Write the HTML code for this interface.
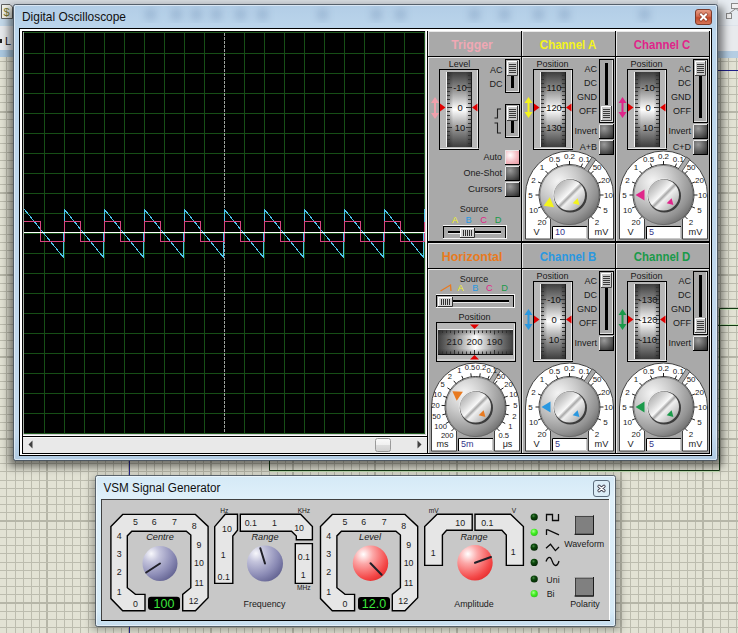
<!DOCTYPE html>
<html><head><meta charset="utf-8"><style>
html,body{margin:0;padding:0;width:738px;height:633px;overflow:hidden;background:#e2e2d4}
svg{display:block;font-family:'Liberation Sans', sans-serif}
</style></head><body>
<svg width="738" height="633" viewBox="0 0 738 633">

<defs>
 <linearGradient id="glass" x1="0" y1="0" x2="0" y2="1">
  <stop offset="0" stop-color="#b2cde6"/><stop offset="0.06" stop-color="#bcd6ec"/><stop offset="0.94" stop-color="#c4d9ec"/><stop offset="1" stop-color="#b0cae2"/>
 </linearGradient>
 <linearGradient id="glass2" x1="0" y1="0" x2="0" y2="1">
  <stop offset="0" stop-color="#d4e9f6"/><stop offset="0.15" stop-color="#dff0fa"/><stop offset="0.9" stop-color="#d6eaf6"/><stop offset="1" stop-color="#c4dcee"/>
 </linearGradient>
 <linearGradient id="closeg" x1="0" y1="0" x2="0" y2="1">
  <stop offset="0" stop-color="#e8a088"/><stop offset="0.45" stop-color="#d2694e"/><stop offset="0.55" stop-color="#c24a2c"/><stop offset="1" stop-color="#d8785a"/>
 </linearGradient>
 <linearGradient id="drumV" x1="0" y1="0" x2="0" y2="1">
  <stop offset="0" stop-color="#3e3e3e"/><stop offset="0.22" stop-color="#8a8a8a"/><stop offset="0.5" stop-color="#ffffff"/><stop offset="0.78" stop-color="#8a8a8a"/><stop offset="1" stop-color="#3e3e3e"/>
 </linearGradient>
 <linearGradient id="drumH" x1="0" y1="0" x2="1" y2="0">
  <stop offset="0" stop-color="#3e3e3e"/><stop offset="0.22" stop-color="#8a8a8a"/><stop offset="0.5" stop-color="#ffffff"/><stop offset="0.78" stop-color="#8a8a8a"/><stop offset="1" stop-color="#3e3e3e"/>
 </linearGradient>
 <linearGradient id="drumEdgeH" x1="0" y1="0" x2="1" y2="0">
  <stop offset="0" stop-color="#000" stop-opacity="0.35"/><stop offset="0.25" stop-color="#000" stop-opacity="0"/><stop offset="0.75" stop-color="#000" stop-opacity="0"/><stop offset="1" stop-color="#000" stop-opacity="0.35"/>
 </linearGradient>
 <linearGradient id="drumEdgeV" x1="0" y1="0" x2="0" y2="1">
  <stop offset="0" stop-color="#000" stop-opacity="0.35"/><stop offset="0.25" stop-color="#000" stop-opacity="0"/><stop offset="0.75" stop-color="#000" stop-opacity="0"/><stop offset="1" stop-color="#000" stop-opacity="0.35"/>
 </linearGradient>
 <radialGradient id="btnDark" cx="0.35" cy="0.3" r="0.8">
  <stop offset="0" stop-color="#9a9a9a"/><stop offset="1" stop-color="#2e2e2e"/>
 </radialGradient>
 <radialGradient id="btnPink" cx="0.35" cy="0.35" r="0.8">
  <stop offset="0" stop-color="#ffffff"/><stop offset="0.6" stop-color="#f3b8bf"/><stop offset="1" stop-color="#e89aa4"/>
 </radialGradient>
 <radialGradient id="knobOuter" cx="0.32" cy="0.28" r="0.9">
  <stop offset="0" stop-color="#f6f6f6"/><stop offset="0.35" stop-color="#cacaca"/><stop offset="0.72" stop-color="#939393"/><stop offset="1" stop-color="#555555"/>
 </radialGradient>
 <linearGradient id="knobInner" x1="0" y1="0" x2="1" y2="1">
  <stop offset="0" stop-color="#9a9a9a"/><stop offset="0.3" stop-color="#d4d4d4"/><stop offset="0.46" stop-color="#f8f8f8"/><stop offset="0.52" stop-color="#a8a8a8"/><stop offset="0.58" stop-color="#f0f0f0"/><stop offset="0.8" stop-color="#c0c0c0"/><stop offset="1" stop-color="#8a8a8a"/>
 </linearGradient>
 <radialGradient id="sphBlue" cx="0.25" cy="0.22" r="0.95">
  <stop offset="0" stop-color="#f8f8fc"/><stop offset="0.25" stop-color="#c4c4dc"/><stop offset="0.65" stop-color="#8c8cb6"/><stop offset="1" stop-color="#585888"/>
 </radialGradient>
 <radialGradient id="sphRed" cx="0.3" cy="0.25" r="0.9">
  <stop offset="0" stop-color="#ffffff"/><stop offset="0.3" stop-color="#fca8a8"/><stop offset="0.75" stop-color="#f44848"/><stop offset="1" stop-color="#e02424"/>
 </radialGradient>
 <radialGradient id="ledOff" cx="0.4" cy="0.35" r="0.7">
  <stop offset="0" stop-color="#4a8a4a"/><stop offset="0.35" stop-color="#0c4a0c"/><stop offset="1" stop-color="#042204"/>
 </radialGradient>
 <radialGradient id="ledOn" cx="0.4" cy="0.35" r="0.7">
  <stop offset="0" stop-color="#a8ff90"/><stop offset="0.5" stop-color="#40f020"/><stop offset="1" stop-color="#30c020"/>
 </radialGradient>
 <linearGradient id="thumbg" x1="0" y1="0" x2="0" y2="1">
  <stop offset="0" stop-color="#fafafa"/><stop offset="0.5" stop-color="#f0f0f0"/><stop offset="0.51" stop-color="#dedede"/><stop offset="1" stop-color="#d0d0d0"/>
 </linearGradient>
 <filter id="blur3" x="-20%" y="-20%" width="140%" height="140%"><feGaussianBlur stdDeviation="4"/></filter>
</defs>
<rect x="0" y="0" width="738" height="633" fill="#e2e2d4"/><rect x="6" y="0" width="1" height="633" fill="#bcbcae"/><rect x="15" y="0" width="1" height="633" fill="#bcbcae"/><rect x="23" y="0" width="1" height="633" fill="#bcbcae"/><rect x="31" y="0" width="1" height="633" fill="#bcbcae"/><rect x="39" y="0" width="1" height="633" fill="#bcbcae"/><rect x="46" y="0" width="2" height="633" fill="#b6b6a8"/><rect x="56" y="0" width="1" height="633" fill="#bcbcae"/><rect x="64" y="0" width="1" height="633" fill="#bcbcae"/><rect x="72" y="0" width="1" height="633" fill="#bcbcae"/><rect x="80" y="0" width="1" height="633" fill="#bcbcae"/><rect x="88" y="0" width="1" height="633" fill="#bcbcae"/><rect x="97" y="0" width="1" height="633" fill="#bcbcae"/><rect x="105" y="0" width="1" height="633" fill="#bcbcae"/><rect x="113" y="0" width="1" height="633" fill="#bcbcae"/><rect x="121" y="0" width="1" height="633" fill="#bcbcae"/><rect x="128" y="0" width="2" height="633" fill="#b6b6a8"/><rect x="138" y="0" width="1" height="633" fill="#bcbcae"/><rect x="146" y="0" width="1" height="633" fill="#bcbcae"/><rect x="154" y="0" width="1" height="633" fill="#bcbcae"/><rect x="162" y="0" width="1" height="633" fill="#bcbcae"/><rect x="170" y="0" width="1" height="633" fill="#bcbcae"/><rect x="179" y="0" width="1" height="633" fill="#bcbcae"/><rect x="187" y="0" width="1" height="633" fill="#bcbcae"/><rect x="195" y="0" width="1" height="633" fill="#bcbcae"/><rect x="203" y="0" width="1" height="633" fill="#bcbcae"/><rect x="210" y="0" width="2" height="633" fill="#b6b6a8"/><rect x="220" y="0" width="1" height="633" fill="#bcbcae"/><rect x="228" y="0" width="1" height="633" fill="#bcbcae"/><rect x="236" y="0" width="1" height="633" fill="#bcbcae"/><rect x="244" y="0" width="1" height="633" fill="#bcbcae"/><rect x="252" y="0" width="1" height="633" fill="#bcbcae"/><rect x="261" y="0" width="1" height="633" fill="#bcbcae"/><rect x="269" y="0" width="1" height="633" fill="#bcbcae"/><rect x="277" y="0" width="1" height="633" fill="#bcbcae"/><rect x="285" y="0" width="1" height="633" fill="#bcbcae"/><rect x="292" y="0" width="2" height="633" fill="#b6b6a8"/><rect x="302" y="0" width="1" height="633" fill="#bcbcae"/><rect x="310" y="0" width="1" height="633" fill="#bcbcae"/><rect x="318" y="0" width="1" height="633" fill="#bcbcae"/><rect x="326" y="0" width="1" height="633" fill="#bcbcae"/><rect x="334" y="0" width="1" height="633" fill="#bcbcae"/><rect x="343" y="0" width="1" height="633" fill="#bcbcae"/><rect x="351" y="0" width="1" height="633" fill="#bcbcae"/><rect x="359" y="0" width="1" height="633" fill="#bcbcae"/><rect x="367" y="0" width="1" height="633" fill="#bcbcae"/><rect x="374" y="0" width="2" height="633" fill="#b6b6a8"/><rect x="384" y="0" width="1" height="633" fill="#bcbcae"/><rect x="392" y="0" width="1" height="633" fill="#bcbcae"/><rect x="400" y="0" width="1" height="633" fill="#bcbcae"/><rect x="408" y="0" width="1" height="633" fill="#bcbcae"/><rect x="416" y="0" width="1" height="633" fill="#bcbcae"/><rect x="425" y="0" width="1" height="633" fill="#bcbcae"/><rect x="433" y="0" width="1" height="633" fill="#bcbcae"/><rect x="441" y="0" width="1" height="633" fill="#bcbcae"/><rect x="449" y="0" width="1" height="633" fill="#bcbcae"/><rect x="456" y="0" width="2" height="633" fill="#b6b6a8"/><rect x="466" y="0" width="1" height="633" fill="#bcbcae"/><rect x="474" y="0" width="1" height="633" fill="#bcbcae"/><rect x="482" y="0" width="1" height="633" fill="#bcbcae"/><rect x="490" y="0" width="1" height="633" fill="#bcbcae"/><rect x="498" y="0" width="1" height="633" fill="#bcbcae"/><rect x="507" y="0" width="1" height="633" fill="#bcbcae"/><rect x="515" y="0" width="1" height="633" fill="#bcbcae"/><rect x="523" y="0" width="1" height="633" fill="#bcbcae"/><rect x="531" y="0" width="1" height="633" fill="#bcbcae"/><rect x="538" y="0" width="2" height="633" fill="#b6b6a8"/><rect x="548" y="0" width="1" height="633" fill="#bcbcae"/><rect x="556" y="0" width="1" height="633" fill="#bcbcae"/><rect x="564" y="0" width="1" height="633" fill="#bcbcae"/><rect x="572" y="0" width="1" height="633" fill="#bcbcae"/><rect x="580" y="0" width="1" height="633" fill="#bcbcae"/><rect x="589" y="0" width="1" height="633" fill="#bcbcae"/><rect x="597" y="0" width="1" height="633" fill="#bcbcae"/><rect x="605" y="0" width="1" height="633" fill="#bcbcae"/><rect x="613" y="0" width="1" height="633" fill="#bcbcae"/><rect x="620" y="0" width="2" height="633" fill="#b6b6a8"/><rect x="630" y="0" width="1" height="633" fill="#bcbcae"/><rect x="638" y="0" width="1" height="633" fill="#bcbcae"/><rect x="646" y="0" width="1" height="633" fill="#bcbcae"/><rect x="654" y="0" width="1" height="633" fill="#bcbcae"/><rect x="662" y="0" width="1" height="633" fill="#bcbcae"/><rect x="671" y="0" width="1" height="633" fill="#bcbcae"/><rect x="679" y="0" width="1" height="633" fill="#bcbcae"/><rect x="687" y="0" width="1" height="633" fill="#bcbcae"/><rect x="695" y="0" width="1" height="633" fill="#bcbcae"/><rect x="702" y="0" width="2" height="633" fill="#b6b6a8"/><rect x="712" y="0" width="1" height="633" fill="#bcbcae"/><rect x="720" y="0" width="1" height="633" fill="#bcbcae"/><rect x="728" y="0" width="1" height="633" fill="#bcbcae"/><rect x="736" y="0" width="1" height="633" fill="#bcbcae"/><rect x="0" y="4" width="738" height="1" fill="#bcbcae"/><rect x="0" y="12" width="738" height="1" fill="#bcbcae"/><rect x="0" y="20" width="738" height="1" fill="#bcbcae"/><rect x="0" y="29" width="738" height="2" fill="#b6b6a8"/><rect x="0" y="37" width="738" height="1" fill="#bcbcae"/><rect x="0" y="45" width="738" height="1" fill="#bcbcae"/><rect x="0" y="53" width="738" height="1" fill="#bcbcae"/><rect x="0" y="61" width="738" height="1" fill="#bcbcae"/><rect x="0" y="70" width="738" height="1" fill="#bcbcae"/><rect x="0" y="78" width="738" height="1" fill="#bcbcae"/><rect x="0" y="86" width="738" height="1" fill="#bcbcae"/><rect x="0" y="94" width="738" height="1" fill="#bcbcae"/><rect x="0" y="102" width="738" height="1" fill="#bcbcae"/><rect x="0" y="111" width="738" height="2" fill="#b6b6a8"/><rect x="0" y="119" width="738" height="1" fill="#bcbcae"/><rect x="0" y="127" width="738" height="1" fill="#bcbcae"/><rect x="0" y="135" width="738" height="1" fill="#bcbcae"/><rect x="0" y="143" width="738" height="1" fill="#bcbcae"/><rect x="0" y="152" width="738" height="1" fill="#bcbcae"/><rect x="0" y="160" width="738" height="1" fill="#bcbcae"/><rect x="0" y="168" width="738" height="1" fill="#bcbcae"/><rect x="0" y="176" width="738" height="1" fill="#bcbcae"/><rect x="0" y="184" width="738" height="1" fill="#bcbcae"/><rect x="0" y="192" width="738" height="2" fill="#b6b6a8"/><rect x="0" y="201" width="738" height="1" fill="#bcbcae"/><rect x="0" y="209" width="738" height="1" fill="#bcbcae"/><rect x="0" y="217" width="738" height="1" fill="#bcbcae"/><rect x="0" y="225" width="738" height="1" fill="#bcbcae"/><rect x="0" y="234" width="738" height="1" fill="#bcbcae"/><rect x="0" y="242" width="738" height="1" fill="#bcbcae"/><rect x="0" y="250" width="738" height="1" fill="#bcbcae"/><rect x="0" y="258" width="738" height="1" fill="#bcbcae"/><rect x="0" y="266" width="738" height="1" fill="#bcbcae"/><rect x="0" y="274" width="738" height="2" fill="#b6b6a8"/><rect x="0" y="283" width="738" height="1" fill="#bcbcae"/><rect x="0" y="291" width="738" height="1" fill="#bcbcae"/><rect x="0" y="299" width="738" height="1" fill="#bcbcae"/><rect x="0" y="307" width="738" height="1" fill="#bcbcae"/><rect x="0" y="316" width="738" height="1" fill="#bcbcae"/><rect x="0" y="324" width="738" height="1" fill="#bcbcae"/><rect x="0" y="332" width="738" height="1" fill="#bcbcae"/><rect x="0" y="340" width="738" height="1" fill="#bcbcae"/><rect x="0" y="348" width="738" height="1" fill="#bcbcae"/><rect x="0" y="356" width="738" height="2" fill="#b6b6a8"/><rect x="0" y="365" width="738" height="1" fill="#bcbcae"/><rect x="0" y="373" width="738" height="1" fill="#bcbcae"/><rect x="0" y="381" width="738" height="1" fill="#bcbcae"/><rect x="0" y="389" width="738" height="1" fill="#bcbcae"/><rect x="0" y="398" width="738" height="1" fill="#bcbcae"/><rect x="0" y="406" width="738" height="1" fill="#bcbcae"/><rect x="0" y="414" width="738" height="1" fill="#bcbcae"/><rect x="0" y="422" width="738" height="1" fill="#bcbcae"/><rect x="0" y="430" width="738" height="1" fill="#bcbcae"/><rect x="0" y="438" width="738" height="2" fill="#b6b6a8"/><rect x="0" y="447" width="738" height="1" fill="#bcbcae"/><rect x="0" y="455" width="738" height="1" fill="#bcbcae"/><rect x="0" y="463" width="738" height="1" fill="#bcbcae"/><rect x="0" y="471" width="738" height="1" fill="#bcbcae"/><rect x="0" y="480" width="738" height="1" fill="#bcbcae"/><rect x="0" y="488" width="738" height="1" fill="#bcbcae"/><rect x="0" y="496" width="738" height="1" fill="#bcbcae"/><rect x="0" y="504" width="738" height="1" fill="#bcbcae"/><rect x="0" y="512" width="738" height="1" fill="#bcbcae"/><rect x="0" y="520" width="738" height="2" fill="#b6b6a8"/><rect x="0" y="529" width="738" height="1" fill="#bcbcae"/><rect x="0" y="537" width="738" height="1" fill="#bcbcae"/><rect x="0" y="545" width="738" height="1" fill="#bcbcae"/><rect x="0" y="553" width="738" height="1" fill="#bcbcae"/><rect x="0" y="562" width="738" height="1" fill="#bcbcae"/><rect x="0" y="570" width="738" height="1" fill="#bcbcae"/><rect x="0" y="578" width="738" height="1" fill="#bcbcae"/><rect x="0" y="586" width="738" height="1" fill="#bcbcae"/><rect x="0" y="594" width="738" height="1" fill="#bcbcae"/><rect x="0" y="602" width="738" height="2" fill="#b6b6a8"/><rect x="0" y="611" width="738" height="1" fill="#bcbcae"/><rect x="0" y="619" width="738" height="1" fill="#bcbcae"/><rect x="0" y="627" width="738" height="1" fill="#bcbcae"/><rect x="0" y="0" width="738" height="26" fill="#dde3ea"/><rect x="0" y="0" width="738" height="4" fill="#d6dbe0"/><rect x="0" y="18" width="16" height="8" fill="#c4d9ea"/><rect x="0" y="26" width="738" height="25" fill="#e8eaed"/><rect x="0" y="50" width="16" height="7" fill="#aac8e0"/><rect x="718" y="51" width="20" height="7" fill="#b4cde3"/><rect x="718" y="0" width="20" height="25" fill="#e6ebf0"/><path d="M1.5 4.5 H10 L12.5 7 V18.5 H1.5 Z" fill="#f2f2ea" stroke="#606060"/><text x="6.5" y="16" font-family="'Liberation Sans', sans-serif" font-size="11" fill="#7a7a30" text-anchor="middle">$</text><rect x="0" y="39" width="2" height="4" fill="#202020"/><text x="5" y="44.5" font-family="'Liberation Sans', sans-serif" font-size="11" fill="#101010">L</text><g stroke="#8a8a8a" fill="#f0f0f0"><rect x="731.5" y="3.5" width="9" height="5"/><rect x="726.5" y="13.5" width="5" height="5"/><rect x="738.5" y="13.5" width="5" height="5"/><path d="M736 8.5 L729 13.5 M736 8.5 L741 13.5" fill="none"/></g><rect x="718" y="70" width="20" height="1" fill="#20208a"/><rect x="129" y="455" width="1" height="178" fill="#2a2a90"/><path d="M269.5 455 V470.5 H719.5 V308.5 H738 M718 325.5 H738" fill="none" stroke="#143a14" stroke-width="1"/><path d="M720 309.5 H738 M720 324.5 H738 M270 471.5 H719" fill="none" stroke="#c8f0b8" stroke-width="1" opacity="0.7"/><rect x="9" y="7" width="714" height="460" fill="#000" opacity="0.5" filter="url(#blur3)"/><rect x="92" y="477" width="528" height="153" fill="#000" opacity="0.3" filter="url(#blur3)"/><rect x="13.5" y="4.5" width="704" height="456" rx="2" fill="url(#glass)" stroke="#3c4650" stroke-opacity="0.8"/><rect x="14.5" y="5.5" width="702" height="454" rx="1.5" fill="none" stroke="#ffffff" stroke-opacity="0.5"/><g filter="url(#blur3)" opacity="0.22"><rect x="146" y="9" width="9" height="11" fill="#2a4a7a"/><rect x="172" y="9" width="9" height="11" fill="#2a4a7a"/><rect x="192" y="9" width="9" height="11" fill="#2a4a7a"/><rect x="212" y="9" width="9" height="11" fill="#2a4a7a"/><rect x="236" y="9" width="9" height="11" fill="#2a4a7a"/><rect x="258" y="9" width="9" height="11" fill="#2a4a7a"/><rect x="318" y="9" width="9" height="11" fill="#2a4a7a"/><rect x="372" y="9" width="9" height="11" fill="#2a4a7a"/><rect x="396" y="9" width="9" height="11" fill="#2a4a7a"/><rect x="470" y="9" width="9" height="11" fill="#2a4a7a"/><rect x="500" y="9" width="9" height="11" fill="#2a4a7a"/><rect x="534" y="9" width="9" height="11" fill="#2a4a7a"/><rect x="560" y="9" width="9" height="11" fill="#2a4a7a"/><rect x="640" y="9" width="9" height="11" fill="#2a4a7a"/></g><text x="22" y="21" font-size="12.4" fill="#101010" text-anchor="start" font-weight="normal" font-style="normal" textLength="104" lengthAdjust="spacingAndGlyphs">Digital Oscilloscope</text><rect x="695.5" y="9.5" width="16" height="15" rx="2.5" fill="url(#closeg)" stroke="#7a3a2a"/><path d="M701 14.5 L706 19.5 M706 14.5 L701 19.5" stroke="#5a2010" stroke-width="3.4" stroke-linecap="square" opacity="0.55"/><path d="M701 14.5 L706 19.5 M706 14.5 L701 19.5" stroke="#ffffff" stroke-width="2" stroke-linecap="square"/><rect x="19" y="28" width="693" height="428" fill="#000"/><rect x="20" y="29" width="691" height="426" fill="#ffffff"/><rect x="22" y="31" width="688" height="423" fill="#000"/><rect x="23" y="32" width="403" height="402" fill="#000"/><rect x="23" y="32" width="1" height="402" fill="#164e16"/><rect x="44" y="32" width="1" height="402" fill="#164e16"/><rect x="64" y="32" width="1" height="402" fill="#164e16"/><rect x="84" y="32" width="1" height="402" fill="#164e16"/><rect x="104" y="32" width="1" height="402" fill="#164e16"/><rect x="124" y="32" width="1" height="402" fill="#164e16"/><rect x="144" y="32" width="1" height="402" fill="#164e16"/><rect x="164" y="32" width="1" height="402" fill="#164e16"/><rect x="184" y="32" width="1" height="402" fill="#164e16"/><rect x="204" y="32" width="1" height="402" fill="#164e16"/><rect x="244" y="32" width="1" height="402" fill="#164e16"/><rect x="264" y="32" width="1" height="402" fill="#164e16"/><rect x="284" y="32" width="1" height="402" fill="#164e16"/><rect x="304" y="32" width="1" height="402" fill="#164e16"/><rect x="324" y="32" width="1" height="402" fill="#164e16"/><rect x="344" y="32" width="1" height="402" fill="#164e16"/><rect x="364" y="32" width="1" height="402" fill="#164e16"/><rect x="384" y="32" width="1" height="402" fill="#164e16"/><rect x="404" y="32" width="1" height="402" fill="#164e16"/><rect x="424" y="32" width="1" height="402" fill="#164e16"/><rect x="23" y="32" width="403" height="1" fill="#164e16"/><rect x="23" y="53" width="403" height="1" fill="#164e16"/><rect x="23" y="73" width="403" height="1" fill="#164e16"/><rect x="23" y="93" width="403" height="1" fill="#164e16"/><rect x="23" y="113" width="403" height="1" fill="#164e16"/><rect x="23" y="133" width="403" height="1" fill="#164e16"/><rect x="23" y="153" width="403" height="1" fill="#164e16"/><rect x="23" y="173" width="403" height="1" fill="#164e16"/><rect x="23" y="193" width="403" height="1" fill="#164e16"/><rect x="23" y="213" width="403" height="1" fill="#164e16"/><rect x="23" y="233" width="403" height="1" fill="#164e16"/><rect x="23" y="253" width="403" height="1" fill="#164e16"/><rect x="23" y="273" width="403" height="1" fill="#164e16"/><rect x="23" y="293" width="403" height="1" fill="#164e16"/><rect x="23" y="313" width="403" height="1" fill="#164e16"/><rect x="23" y="333" width="403" height="1" fill="#164e16"/><rect x="23" y="353" width="403" height="1" fill="#164e16"/><rect x="23" y="373" width="403" height="1" fill="#164e16"/><rect x="23" y="393" width="403" height="1" fill="#164e16"/><rect x="23" y="413" width="403" height="1" fill="#164e16"/><rect x="23" y="433" width="403" height="1" fill="#164e16"/><rect x="23.5" y="32.5" width="401" height="401" fill="none" stroke="#1e561e"/><line x1="224.5" y1="33" x2="224.5" y2="433" stroke="#9ca29c" stroke-dasharray="3,1"/><polyline points="24.5,209.5 63.5,257.5 64.5,209.5 103.5,257.5 104.5,209.5 143.5,257.5 144.5,209.5 183.5,257.5 184.5,209.5 223.5,257.5 224.5,209.5 263.5,257.5 264.5,209.5 303.5,257.5 304.5,209.5 343.5,257.5 344.5,209.5 383.5,257.5 384.5,209.5 423.5,257.5 424.5,209.5 424.5,209.5" fill="none" stroke="#4cc4ec" stroke-width="1" shape-rendering="crispEdges"/><polyline points="23.5,241.5 23.5,221.5 40.5,221.5 40.5,241.5 64.5,241.5 64.5,221.5 80.5,221.5 80.5,241.5 104.5,241.5 104.5,221.5 120.5,221.5 120.5,241.5 144.5,241.5 144.5,221.5 160.5,221.5 160.5,241.5 184.5,241.5 184.5,221.5 200.5,221.5 200.5,241.5 224.5,241.5 224.5,221.5 240.5,221.5 240.5,241.5 264.5,241.5 264.5,221.5 280.5,221.5 280.5,241.5 304.5,241.5 304.5,221.5 320.5,221.5 320.5,241.5 344.5,241.5 344.5,221.5 360.5,221.5 360.5,241.5 384.5,241.5 384.5,221.5 400.5,221.5 400.5,241.5 424.5,241.5 424.5,221.5" fill="none" stroke="#d8447e" stroke-width="1" shape-rendering="crispEdges"/><rect x="23" y="232" width="403" height="1" fill="#ffffff"/><rect x="23" y="32" width="1" height="402" fill="#a8b0a8"/><rect x="425" y="31" width="1" height="405" fill="#d8d8d8"/><rect x="426" y="31" width="1" height="405" fill="#ffffff"/><rect x="23" y="434" width="403" height="1" fill="#d0d0d0"/><rect x="23" y="435" width="403" height="1" fill="#ffffff"/><rect x="23" y="437" width="404" height="16" fill="#e9e9e9"/><rect x="23" y="437" width="404" height="1" fill="#f8f8f8"/><path d="M28.5 444.5 L32.5 440.5 L32.5 448.5 Z" fill="#404040"/><path d="M421.5 444.5 L417.5 440.5 L417.5 448.5 Z" fill="#404040"/><rect x="375.5" y="438.5" width="15" height="13" rx="2" fill="url(#thumbg)" stroke="#9a9a9a"/><rect x="428" y="31" width="282" height="423" fill="#000"/><rect x="522" y="31" width="93" height="25" fill="#a9a9a9"/><rect x="522" y="31" width="93" height="1" fill="#e8e8e8"/><rect x="522" y="31" width="1" height="25" fill="#e8e8e8"/><rect x="522" y="57" width="93" height="184" fill="#a9a9a9"/><rect x="522" y="57" width="93" height="1" fill="#e8e8e8"/><rect x="522" y="57" width="1" height="184" fill="#e8e8e8"/><text x="568.1" y="48.8" font-size="12" fill="#f4f41c" text-anchor="middle" font-weight="bold" font-style="normal" textLength="56.5" lengthAdjust="spacingAndGlyphs">Channel A</text><text x="552.5" y="66.5" font-size="9" fill="#1a1a1a" text-anchor="middle" font-weight="normal" font-style="normal" >Position</text><rect x="533.5" y="69.5" width="39" height="80" fill="#b8b8b8" stroke="#000"/><path d="M534 148.5 H572.5 M571.5 70 V148.5" stroke="#e8e8e8" fill="none"/><rect x="541" y="72" width="25" height="75" fill="url(#drumV)"/><rect x="541" y="72" width="25" height="75" fill="url(#drumEdgeH)"/><rect x="540" y="72" width="1" height="75" fill="#f4f4f4"/><rect x="565" y="72" width="1" height="75" fill="#1a1a1a"/><path d="M541 75.5 h3 M565 75.5 h-3 M541 79.5 h3 M565 79.5 h-3 M541 83.5 h3 M565 83.5 h-3 M541 87.5 h5 M565 87.5 h-5 M541 91.5 h3 M565 91.5 h-3 M541 95.5 h3 M565 95.5 h-3 M541 99.5 h3 M565 99.5 h-3 M541 103.5 h3 M565 103.5 h-3 M541 107.5 h5 M565 107.5 h-5 M541 111.5 h3 M565 111.5 h-3 M541 115.5 h3 M565 115.5 h-3 M541 119.5 h3 M565 119.5 h-3 M541 123.5 h3 M565 123.5 h-3 M541 127.5 h5 M565 127.5 h-5 M541 131.5 h3 M565 131.5 h-3 M541 135.5 h3 M565 135.5 h-3 M541 139.5 h3 M565 139.5 h-3 M541 143.5 h3 M565 143.5 h-3" stroke="#333" stroke-width="1" fill="none"/><text x="554.0" y="90.8" font-size="9.4" fill="#101010" text-anchor="middle" font-weight="normal" font-style="normal" >110</text><text x="554.0" y="110.8" font-size="9.4" fill="#101010" text-anchor="middle" font-weight="normal" font-style="normal" >120</text><text x="554.0" y="130.8" font-size="9.4" fill="#101010" text-anchor="middle" font-weight="normal" font-style="normal" >130</text><path d="M534 103.5 L539.5 107.5 L534 111.5 Z" fill="#e00000"/><path d="M571.5 103.5 L566 107.5 L571.5 111.5 Z" fill="#e00000"/><path d="M528.5 97 L532.5 103 L529.5 103 L529.5 112 L532.5 112 L528.5 118 L524.5 112 L527.5 112 L527.5 103 L524.5 103 Z" fill="#f4f41c"/><text x="597" y="72.3" font-size="9" fill="#1a1a1a" text-anchor="end" font-weight="normal" font-style="normal" >AC</text><text x="597" y="86.3" font-size="9" fill="#1a1a1a" text-anchor="end" font-weight="normal" font-style="normal" >DC</text><text x="597" y="100.3" font-size="9" fill="#1a1a1a" text-anchor="end" font-weight="normal" font-style="normal" >GND</text><text x="597" y="114.3" font-size="9" fill="#1a1a1a" text-anchor="end" font-weight="normal" font-style="normal" >OFF</text><rect x="599.5" y="59.5" width="14" height="63" fill="#a9a9a9" stroke="#000"/><path d="M600 121.5 H613 M612.5 60 V122" stroke="#e0e0e0" fill="none"/><rect x="605" y="63" width="3" height="42" fill="#000"/><rect x="601" y="106" width="11" height="15" fill="#c8c8c8"/><path d="M601.5 121 V106.5 H611.5" stroke="#ffffff" fill="none"/><path d="M601 120.5 H611.5 V106" stroke="#404040" fill="none"/><path d="M603 109.5 H610 M603 111.5 H610 M603 113.5 H610 M603 115.5 H610 M603 117.5 H610" stroke="#3a3a3a" stroke-width="1" fill="none"/><text x="597" y="133.8" font-size="9" fill="#1a1a1a" text-anchor="end" font-weight="normal" font-style="normal" >Invert</text><rect x="599" y="124" width="15" height="15" fill="url(#btnDark)"/><path d="M599.5 139 V124.5 H614" stroke="#e8e8e8" fill="none"/><path d="M599 138.5 H613.5 V124" stroke="#000" fill="none"/><text x="597" y="149.8" font-size="9" fill="#1a1a1a" text-anchor="end" font-weight="normal" font-style="normal" >A+B</text><rect x="599" y="140" width="15" height="15" fill="url(#btnDark)"/><path d="M599.5 155 V140.5 H614" stroke="#e8e8e8" fill="none"/><path d="M599 154.5 H613.5 V140" stroke="#000" fill="none"/><path d="M525.5 239 V195 A44 44 0 0 1 613.5 195 V239 H588.5 V218.86 A30.5 30.5 0 1 0 550.5 218.86 V239 Z" fill="#ffffff" stroke="#404040" stroke-width="1"/><polygon points="583.78,169.67 592.28,156.94 595.94,159.39 587.44,172.11" fill="#a9a9a9" stroke="#404040" stroke-width="0.8"/><text x="541.92" y="225.46" font-size="8.0" fill="#1a1a1a" text-anchor="middle" font-weight="normal" font-style="normal" >20</text><text x="533.47" y="212.8" font-size="8.0" fill="#1a1a1a" text-anchor="middle" font-weight="normal" font-style="normal" >10</text><text x="530.5" y="197.88" font-size="8.0" fill="#1a1a1a" text-anchor="middle" font-weight="normal" font-style="normal" >5</text><text x="533.47" y="182.96" font-size="8.0" fill="#1a1a1a" text-anchor="middle" font-weight="normal" font-style="normal" >2</text><text x="541.92" y="170.3" font-size="8.0" fill="#1a1a1a" text-anchor="middle" font-weight="normal" font-style="normal" >1</text><text x="554.58" y="161.85" font-size="8.0" fill="#1a1a1a" text-anchor="middle" font-weight="normal" font-style="normal" >0.5</text><text x="569.5" y="158.88" font-size="8.0" fill="#1a1a1a" text-anchor="middle" font-weight="normal" font-style="normal" >0.2</text><text x="584.42" y="161.85" font-size="8.0" fill="#1a1a1a" text-anchor="middle" font-weight="normal" font-style="normal" >0.1</text><text x="597.08" y="170.3" font-size="8.0" fill="#1a1a1a" text-anchor="middle" font-weight="normal" font-style="normal" >50</text><text x="605.53" y="182.96" font-size="8.0" fill="#1a1a1a" text-anchor="middle" font-weight="normal" font-style="normal" >20</text><text x="608.5" y="197.88" font-size="8.0" fill="#1a1a1a" text-anchor="middle" font-weight="normal" font-style="normal" >10</text><text x="605.53" y="212.8" font-size="8.0" fill="#1a1a1a" text-anchor="middle" font-weight="normal" font-style="normal" >5</text><text x="597.08" y="225.46" font-size="8.0" fill="#1a1a1a" text-anchor="middle" font-weight="normal" font-style="normal" >2</text><path d="M548.64 215.86 L545.46 219.04 M542.25 206.29 L538.09 208.01 M540.00 195.00 L535.50 195.00 M542.25 183.71 L538.09 181.99 M548.64 174.14 L545.46 170.96 M558.21 167.75 L556.49 163.59 M569.50 165.50 L569.50 161.00 M580.79 167.75 L582.51 163.59 M590.36 174.14 L593.54 170.96 M596.75 183.71 L600.91 181.99 M599.00 195.00 L603.50 195.00 M596.75 206.29 L600.91 208.01 M590.36 215.86 L593.54 219.04" stroke="#202020" stroke-width="1" fill="none"/><text x="536.5" y="234.7" font-size="9.2" fill="#1a1a1a" text-anchor="middle" font-weight="normal" font-style="normal" >V</text><text x="601.5" y="234.7" font-size="9.2" fill="#1a1a1a" text-anchor="middle" font-weight="normal" font-style="normal" >mV</text><rect x="552" y="226" width="35" height="13" fill="#ffffff"/><path d="M552.5 239 V226.5 H587" stroke="#000" fill="none"/><path d="M553 238.5 H586.5 V227" stroke="#c8c8c8" fill="none"/><text x="555" y="235.4" font-size="9" fill="#34348a" text-anchor="start" font-weight="normal" font-style="normal" >10</text><circle cx="569.5" cy="195" r="30" fill="url(#knobOuter)"/><circle cx="569.5" cy="195" r="29.6" fill="none" stroke="#5a5a5a" stroke-width="0.8" opacity="0.7"/><circle cx="568.9" cy="194.4" r="16.3" fill="#e8e8e8" opacity="0.8"/><circle cx="570.4" cy="195.9" r="16.6" fill="#2a2a2a" opacity="0.85"/><circle cx="569.5" cy="195" r="15.5" fill="url(#knobInner)"/><polygon points="543.63,205.72 549.84,197.19 554.05,207.35" fill="#f4f41c"/><polygon points="579.40,204.90 572.68,203.13 577.63,198.18" fill="#f4f41c"/><rect x="616" y="31" width="93" height="25" fill="#a9a9a9"/><rect x="616" y="31" width="93" height="1" fill="#e8e8e8"/><rect x="616" y="31" width="1" height="25" fill="#e8e8e8"/><rect x="616" y="57" width="93" height="184" fill="#a9a9a9"/><rect x="616" y="57" width="93" height="1" fill="#e8e8e8"/><rect x="616" y="57" width="1" height="184" fill="#e8e8e8"/><text x="662.1" y="48.8" font-size="12" fill="#e0258a" text-anchor="middle" font-weight="bold" font-style="normal" textLength="56.5" lengthAdjust="spacingAndGlyphs">Channel C</text><text x="646.5" y="66.5" font-size="9" fill="#1a1a1a" text-anchor="middle" font-weight="normal" font-style="normal" >Position</text><rect x="627.5" y="69.5" width="39" height="80" fill="#b8b8b8" stroke="#000"/><path d="M628 148.5 H666.5 M665.5 70 V148.5" stroke="#e8e8e8" fill="none"/><rect x="635" y="72" width="25" height="75" fill="url(#drumV)"/><rect x="635" y="72" width="25" height="75" fill="url(#drumEdgeH)"/><rect x="634" y="72" width="1" height="75" fill="#f4f4f4"/><rect x="659" y="72" width="1" height="75" fill="#1a1a1a"/><path d="M635 75.5 h3 M659 75.5 h-3 M635 79.5 h3 M659 79.5 h-3 M635 83.5 h3 M659 83.5 h-3 M635 87.5 h5 M659 87.5 h-5 M635 91.5 h3 M659 91.5 h-3 M635 95.5 h3 M659 95.5 h-3 M635 99.5 h3 M659 99.5 h-3 M635 103.5 h3 M659 103.5 h-3 M635 107.5 h5 M659 107.5 h-5 M635 111.5 h3 M659 111.5 h-3 M635 115.5 h3 M659 115.5 h-3 M635 119.5 h3 M659 119.5 h-3 M635 123.5 h3 M659 123.5 h-3 M635 127.5 h5 M659 127.5 h-5 M635 131.5 h3 M659 131.5 h-3 M635 135.5 h3 M659 135.5 h-3 M635 139.5 h3 M659 139.5 h-3 M635 143.5 h3 M659 143.5 h-3" stroke="#333" stroke-width="1" fill="none"/><text x="648.0" y="90.8" font-size="9.4" fill="#101010" text-anchor="middle" font-weight="normal" font-style="normal" >-10</text><text x="648.0" y="110.8" font-size="9.4" fill="#101010" text-anchor="middle" font-weight="normal" font-style="normal" >0</text><text x="648.0" y="130.8" font-size="9.4" fill="#101010" text-anchor="middle" font-weight="normal" font-style="normal" >10</text><path d="M628 103.5 L633.5 107.5 L628 111.5 Z" fill="#e00000"/><path d="M665.5 103.5 L660 107.5 L665.5 111.5 Z" fill="#e00000"/><path d="M622.5 97 L626.5 103 L623.5 103 L623.5 112 L626.5 112 L622.5 118 L618.5 112 L621.5 112 L621.5 103 L618.5 103 Z" fill="#e0258a"/><text x="691" y="72.3" font-size="9" fill="#1a1a1a" text-anchor="end" font-weight="normal" font-style="normal" >AC</text><text x="691" y="86.3" font-size="9" fill="#1a1a1a" text-anchor="end" font-weight="normal" font-style="normal" >DC</text><text x="691" y="100.3" font-size="9" fill="#1a1a1a" text-anchor="end" font-weight="normal" font-style="normal" >GND</text><text x="691" y="114.3" font-size="9" fill="#1a1a1a" text-anchor="end" font-weight="normal" font-style="normal" >OFF</text><rect x="693.5" y="59.5" width="14" height="63" fill="#a9a9a9" stroke="#000"/><path d="M694 121.5 H707 M706.5 60 V122" stroke="#e0e0e0" fill="none"/><rect x="699" y="76" width="3" height="42" fill="#000"/><rect x="695" y="61" width="11" height="15" fill="#c8c8c8"/><path d="M695.5 76 V61.5 H705.5" stroke="#ffffff" fill="none"/><path d="M695 75.5 H705.5 V61" stroke="#404040" fill="none"/><path d="M697 64.5 H704 M697 66.5 H704 M697 68.5 H704 M697 70.5 H704 M697 72.5 H704" stroke="#3a3a3a" stroke-width="1" fill="none"/><text x="691" y="133.8" font-size="9" fill="#1a1a1a" text-anchor="end" font-weight="normal" font-style="normal" >Invert</text><rect x="693" y="124" width="15" height="15" fill="url(#btnDark)"/><path d="M693.5 139 V124.5 H708" stroke="#e8e8e8" fill="none"/><path d="M693 138.5 H707.5 V124" stroke="#000" fill="none"/><text x="691" y="149.8" font-size="9" fill="#1a1a1a" text-anchor="end" font-weight="normal" font-style="normal" >C+D</text><rect x="693" y="140" width="15" height="15" fill="url(#btnDark)"/><path d="M693.5 155 V140.5 H708" stroke="#e8e8e8" fill="none"/><path d="M693 154.5 H707.5 V140" stroke="#000" fill="none"/><path d="M619.5 239 V195 A44 44 0 0 1 707.5 195 V239 H682.5 V218.86 A30.5 30.5 0 1 0 644.5 218.86 V239 Z" fill="#ffffff" stroke="#404040" stroke-width="1"/><polygon points="677.78,169.67 686.28,156.94 689.94,159.39 681.44,172.11" fill="#a9a9a9" stroke="#404040" stroke-width="0.8"/><text x="635.92" y="225.46" font-size="8.0" fill="#1a1a1a" text-anchor="middle" font-weight="normal" font-style="normal" >20</text><text x="627.47" y="212.8" font-size="8.0" fill="#1a1a1a" text-anchor="middle" font-weight="normal" font-style="normal" >10</text><text x="624.5" y="197.88" font-size="8.0" fill="#1a1a1a" text-anchor="middle" font-weight="normal" font-style="normal" >5</text><text x="627.47" y="182.96" font-size="8.0" fill="#1a1a1a" text-anchor="middle" font-weight="normal" font-style="normal" >2</text><text x="635.92" y="170.3" font-size="8.0" fill="#1a1a1a" text-anchor="middle" font-weight="normal" font-style="normal" >1</text><text x="648.58" y="161.85" font-size="8.0" fill="#1a1a1a" text-anchor="middle" font-weight="normal" font-style="normal" >0.5</text><text x="663.5" y="158.88" font-size="8.0" fill="#1a1a1a" text-anchor="middle" font-weight="normal" font-style="normal" >0.2</text><text x="678.42" y="161.85" font-size="8.0" fill="#1a1a1a" text-anchor="middle" font-weight="normal" font-style="normal" >0.1</text><text x="691.08" y="170.3" font-size="8.0" fill="#1a1a1a" text-anchor="middle" font-weight="normal" font-style="normal" >50</text><text x="699.53" y="182.96" font-size="8.0" fill="#1a1a1a" text-anchor="middle" font-weight="normal" font-style="normal" >20</text><text x="702.5" y="197.88" font-size="8.0" fill="#1a1a1a" text-anchor="middle" font-weight="normal" font-style="normal" >10</text><text x="699.53" y="212.8" font-size="8.0" fill="#1a1a1a" text-anchor="middle" font-weight="normal" font-style="normal" >5</text><text x="691.08" y="225.46" font-size="8.0" fill="#1a1a1a" text-anchor="middle" font-weight="normal" font-style="normal" >2</text><path d="M642.64 215.86 L639.46 219.04 M636.25 206.29 L632.09 208.01 M634.00 195.00 L629.50 195.00 M636.25 183.71 L632.09 181.99 M642.64 174.14 L639.46 170.96 M652.21 167.75 L650.49 163.59 M663.50 165.50 L663.50 161.00 M674.79 167.75 L676.51 163.59 M684.36 174.14 L687.54 170.96 M690.75 183.71 L694.91 181.99 M693.00 195.00 L697.50 195.00 M690.75 206.29 L694.91 208.01 M684.36 215.86 L687.54 219.04" stroke="#202020" stroke-width="1" fill="none"/><text x="630.5" y="234.7" font-size="9.2" fill="#1a1a1a" text-anchor="middle" font-weight="normal" font-style="normal" >V</text><text x="695.5" y="234.7" font-size="9.2" fill="#1a1a1a" text-anchor="middle" font-weight="normal" font-style="normal" >mV</text><rect x="646" y="226" width="35" height="13" fill="#ffffff"/><path d="M646.5 239 V226.5 H681" stroke="#000" fill="none"/><path d="M647 238.5 H680.5 V227" stroke="#c8c8c8" fill="none"/><text x="649" y="235.4" font-size="9" fill="#34348a" text-anchor="start" font-weight="normal" font-style="normal" >5</text><circle cx="663.5" cy="195" r="30" fill="url(#knobOuter)"/><circle cx="663.5" cy="195" r="29.6" fill="none" stroke="#5a5a5a" stroke-width="0.8" opacity="0.7"/><circle cx="662.9" cy="194.4" r="16.3" fill="#e8e8e8" opacity="0.8"/><circle cx="664.4" cy="195.9" r="16.6" fill="#2a2a2a" opacity="0.85"/><circle cx="663.5" cy="195" r="15.5" fill="url(#knobInner)"/><polygon points="635.50,195.00 644.50,189.50 644.50,200.50" fill="#e0258a"/><polygon points="673.40,204.90 666.68,203.13 671.63,198.18" fill="#e0258a"/><rect x="522" y="243" width="93" height="25" fill="#a9a9a9"/><rect x="522" y="243" width="93" height="1" fill="#e8e8e8"/><rect x="522" y="243" width="1" height="25" fill="#e8e8e8"/><rect x="522" y="269" width="93" height="184" fill="#a9a9a9"/><rect x="522" y="269" width="93" height="1" fill="#e8e8e8"/><rect x="522" y="269" width="1" height="184" fill="#e8e8e8"/><text x="568.1" y="260.8" font-size="12" fill="#2a98e0" text-anchor="middle" font-weight="bold" font-style="normal" textLength="56.5" lengthAdjust="spacingAndGlyphs">Channel B</text><text x="552.5" y="278.5" font-size="9" fill="#1a1a1a" text-anchor="middle" font-weight="normal" font-style="normal" >Position</text><rect x="533.5" y="281.5" width="39" height="80" fill="#b8b8b8" stroke="#000"/><path d="M534 360.5 H572.5 M571.5 282 V360.5" stroke="#e8e8e8" fill="none"/><rect x="541" y="284" width="25" height="75" fill="url(#drumV)"/><rect x="541" y="284" width="25" height="75" fill="url(#drumEdgeH)"/><rect x="540" y="284" width="1" height="75" fill="#f4f4f4"/><rect x="565" y="284" width="1" height="75" fill="#1a1a1a"/><path d="M541 287.5 h3 M565 287.5 h-3 M541 291.5 h3 M565 291.5 h-3 M541 295.5 h3 M565 295.5 h-3 M541 299.5 h5 M565 299.5 h-5 M541 303.5 h3 M565 303.5 h-3 M541 307.5 h3 M565 307.5 h-3 M541 311.5 h3 M565 311.5 h-3 M541 315.5 h3 M565 315.5 h-3 M541 319.5 h5 M565 319.5 h-5 M541 323.5 h3 M565 323.5 h-3 M541 327.5 h3 M565 327.5 h-3 M541 331.5 h3 M565 331.5 h-3 M541 335.5 h3 M565 335.5 h-3 M541 339.5 h5 M565 339.5 h-5 M541 343.5 h3 M565 343.5 h-3 M541 347.5 h3 M565 347.5 h-3 M541 351.5 h3 M565 351.5 h-3 M541 355.5 h3 M565 355.5 h-3" stroke="#333" stroke-width="1" fill="none"/><text x="554.0" y="302.8" font-size="9.4" fill="#101010" text-anchor="middle" font-weight="normal" font-style="normal" >-10</text><text x="554.0" y="322.8" font-size="9.4" fill="#101010" text-anchor="middle" font-weight="normal" font-style="normal" >0</text><text x="554.0" y="342.8" font-size="9.4" fill="#101010" text-anchor="middle" font-weight="normal" font-style="normal" >10</text><path d="M534 315.5 L539.5 319.5 L534 323.5 Z" fill="#e00000"/><path d="M571.5 315.5 L566 319.5 L571.5 323.5 Z" fill="#e00000"/><path d="M528.5 309 L532.5 315 L529.5 315 L529.5 324 L532.5 324 L528.5 330 L524.5 324 L527.5 324 L527.5 315 L524.5 315 Z" fill="#2a98e0"/><text x="597" y="284.3" font-size="9" fill="#1a1a1a" text-anchor="end" font-weight="normal" font-style="normal" >AC</text><text x="597" y="298.3" font-size="9" fill="#1a1a1a" text-anchor="end" font-weight="normal" font-style="normal" >DC</text><text x="597" y="312.3" font-size="9" fill="#1a1a1a" text-anchor="end" font-weight="normal" font-style="normal" >GND</text><text x="597" y="326.3" font-size="9" fill="#1a1a1a" text-anchor="end" font-weight="normal" font-style="normal" >OFF</text><rect x="599.5" y="271.5" width="14" height="63" fill="#a9a9a9" stroke="#000"/><path d="M600 333.5 H613 M612.5 272 V334" stroke="#e0e0e0" fill="none"/><rect x="605" y="288" width="3" height="42" fill="#000"/><rect x="601" y="273" width="11" height="15" fill="#c8c8c8"/><path d="M601.5 288 V273.5 H611.5" stroke="#ffffff" fill="none"/><path d="M601 287.5 H611.5 V273" stroke="#404040" fill="none"/><path d="M603 276.5 H610 M603 278.5 H610 M603 280.5 H610 M603 282.5 H610 M603 284.5 H610" stroke="#3a3a3a" stroke-width="1" fill="none"/><text x="597" y="345.8" font-size="9" fill="#1a1a1a" text-anchor="end" font-weight="normal" font-style="normal" >Invert</text><rect x="599" y="336" width="15" height="15" fill="url(#btnDark)"/><path d="M599.5 351 V336.5 H614" stroke="#e8e8e8" fill="none"/><path d="M599 350.5 H613.5 V336" stroke="#000" fill="none"/><path d="M525.5 451 V407 A44 44 0 0 1 613.5 407 V451 H588.5 V430.86 A30.5 30.5 0 1 0 550.5 430.86 V451 Z" fill="#ffffff" stroke="#404040" stroke-width="1"/><polygon points="583.78,381.67 592.28,368.94 595.94,371.39 587.44,384.11" fill="#a9a9a9" stroke="#404040" stroke-width="0.8"/><text x="541.92" y="437.46" font-size="8.0" fill="#1a1a1a" text-anchor="middle" font-weight="normal" font-style="normal" >20</text><text x="533.47" y="424.8" font-size="8.0" fill="#1a1a1a" text-anchor="middle" font-weight="normal" font-style="normal" >10</text><text x="530.5" y="409.88" font-size="8.0" fill="#1a1a1a" text-anchor="middle" font-weight="normal" font-style="normal" >5</text><text x="533.47" y="394.96" font-size="8.0" fill="#1a1a1a" text-anchor="middle" font-weight="normal" font-style="normal" >2</text><text x="541.92" y="382.3" font-size="8.0" fill="#1a1a1a" text-anchor="middle" font-weight="normal" font-style="normal" >1</text><text x="554.58" y="373.85" font-size="8.0" fill="#1a1a1a" text-anchor="middle" font-weight="normal" font-style="normal" >0.5</text><text x="569.5" y="370.88" font-size="8.0" fill="#1a1a1a" text-anchor="middle" font-weight="normal" font-style="normal" >0.2</text><text x="584.42" y="373.85" font-size="8.0" fill="#1a1a1a" text-anchor="middle" font-weight="normal" font-style="normal" >0.1</text><text x="597.08" y="382.3" font-size="8.0" fill="#1a1a1a" text-anchor="middle" font-weight="normal" font-style="normal" >50</text><text x="605.53" y="394.96" font-size="8.0" fill="#1a1a1a" text-anchor="middle" font-weight="normal" font-style="normal" >20</text><text x="608.5" y="409.88" font-size="8.0" fill="#1a1a1a" text-anchor="middle" font-weight="normal" font-style="normal" >10</text><text x="605.53" y="424.8" font-size="8.0" fill="#1a1a1a" text-anchor="middle" font-weight="normal" font-style="normal" >5</text><text x="597.08" y="437.46" font-size="8.0" fill="#1a1a1a" text-anchor="middle" font-weight="normal" font-style="normal" >2</text><path d="M548.64 427.86 L545.46 431.04 M542.25 418.29 L538.09 420.01 M540.00 407.00 L535.50 407.00 M542.25 395.71 L538.09 393.99 M548.64 386.14 L545.46 382.96 M558.21 379.75 L556.49 375.59 M569.50 377.50 L569.50 373.00 M580.79 379.75 L582.51 375.59 M590.36 386.14 L593.54 382.96 M596.75 395.71 L600.91 393.99 M599.00 407.00 L603.50 407.00 M596.75 418.29 L600.91 420.01 M590.36 427.86 L593.54 431.04" stroke="#202020" stroke-width="1" fill="none"/><text x="536.5" y="446.7" font-size="9.2" fill="#1a1a1a" text-anchor="middle" font-weight="normal" font-style="normal" >V</text><text x="601.5" y="446.7" font-size="9.2" fill="#1a1a1a" text-anchor="middle" font-weight="normal" font-style="normal" >mV</text><rect x="552" y="438" width="35" height="13" fill="#ffffff"/><path d="M552.5 451 V438.5 H587" stroke="#000" fill="none"/><path d="M553 450.5 H586.5 V439" stroke="#c8c8c8" fill="none"/><text x="555" y="447.4" font-size="9" fill="#34348a" text-anchor="start" font-weight="normal" font-style="normal" >5</text><circle cx="569.5" cy="407" r="30" fill="url(#knobOuter)"/><circle cx="569.5" cy="407" r="29.6" fill="none" stroke="#5a5a5a" stroke-width="0.8" opacity="0.7"/><circle cx="568.9" cy="406.4" r="16.3" fill="#e8e8e8" opacity="0.8"/><circle cx="570.4" cy="407.9" r="16.6" fill="#2a2a2a" opacity="0.85"/><circle cx="569.5" cy="407" r="15.5" fill="url(#knobInner)"/><polygon points="541.50,407.00 550.50,401.50 550.50,412.50" fill="#2a98e0"/><polygon points="579.40,416.90 572.68,415.13 577.63,410.18" fill="#2a98e0"/><rect x="616" y="243" width="93" height="25" fill="#a9a9a9"/><rect x="616" y="243" width="93" height="1" fill="#e8e8e8"/><rect x="616" y="243" width="1" height="25" fill="#e8e8e8"/><rect x="616" y="269" width="93" height="184" fill="#a9a9a9"/><rect x="616" y="269" width="93" height="1" fill="#e8e8e8"/><rect x="616" y="269" width="1" height="184" fill="#e8e8e8"/><text x="662.1" y="260.8" font-size="12" fill="#1a9a4a" text-anchor="middle" font-weight="bold" font-style="normal" textLength="56.5" lengthAdjust="spacingAndGlyphs">Channel D</text><text x="646.5" y="278.5" font-size="9" fill="#1a1a1a" text-anchor="middle" font-weight="normal" font-style="normal" >Position</text><rect x="627.5" y="281.5" width="39" height="80" fill="#b8b8b8" stroke="#000"/><path d="M628 360.5 H666.5 M665.5 282 V360.5" stroke="#e8e8e8" fill="none"/><rect x="635" y="284" width="25" height="75" fill="url(#drumV)"/><rect x="635" y="284" width="25" height="75" fill="url(#drumEdgeH)"/><rect x="634" y="284" width="1" height="75" fill="#f4f4f4"/><rect x="659" y="284" width="1" height="75" fill="#1a1a1a"/><path d="M635 287.5 h3 M659 287.5 h-3 M635 291.5 h3 M659 291.5 h-3 M635 295.5 h3 M659 295.5 h-3 M635 299.5 h5 M659 299.5 h-5 M635 303.5 h3 M659 303.5 h-3 M635 307.5 h3 M659 307.5 h-3 M635 311.5 h3 M659 311.5 h-3 M635 315.5 h3 M659 315.5 h-3 M635 319.5 h5 M659 319.5 h-5 M635 323.5 h3 M659 323.5 h-3 M635 327.5 h3 M659 327.5 h-3 M635 331.5 h3 M659 331.5 h-3 M635 335.5 h3 M659 335.5 h-3 M635 339.5 h5 M659 339.5 h-5 M635 343.5 h3 M659 343.5 h-3 M635 347.5 h3 M659 347.5 h-3 M635 351.5 h3 M659 351.5 h-3 M635 355.5 h3 M659 355.5 h-3" stroke="#333" stroke-width="1" fill="none"/><text x="648.0" y="302.8" font-size="9.4" fill="#101010" text-anchor="middle" font-weight="normal" font-style="normal" >-130</text><text x="648.0" y="322.8" font-size="9.4" fill="#101010" text-anchor="middle" font-weight="normal" font-style="normal" >-120</text><text x="648.0" y="342.8" font-size="9.4" fill="#101010" text-anchor="middle" font-weight="normal" font-style="normal" >-110</text><path d="M628 315.5 L633.5 319.5 L628 323.5 Z" fill="#e00000"/><path d="M665.5 315.5 L660 319.5 L665.5 323.5 Z" fill="#e00000"/><path d="M622.5 309 L626.5 315 L623.5 315 L623.5 324 L626.5 324 L622.5 330 L618.5 324 L621.5 324 L621.5 315 L618.5 315 Z" fill="#1a9a4a"/><text x="691" y="284.3" font-size="9" fill="#1a1a1a" text-anchor="end" font-weight="normal" font-style="normal" >AC</text><text x="691" y="298.3" font-size="9" fill="#1a1a1a" text-anchor="end" font-weight="normal" font-style="normal" >DC</text><text x="691" y="312.3" font-size="9" fill="#1a1a1a" text-anchor="end" font-weight="normal" font-style="normal" >GND</text><text x="691" y="326.3" font-size="9" fill="#1a1a1a" text-anchor="end" font-weight="normal" font-style="normal" >OFF</text><rect x="693.5" y="271.5" width="14" height="63" fill="#a9a9a9" stroke="#000"/><path d="M694 333.5 H707 M706.5 272 V334" stroke="#e0e0e0" fill="none"/><rect x="699" y="275" width="3" height="42" fill="#000"/><rect x="695" y="318" width="11" height="15" fill="#c8c8c8"/><path d="M695.5 333 V318.5 H705.5" stroke="#ffffff" fill="none"/><path d="M695 332.5 H705.5 V318" stroke="#404040" fill="none"/><path d="M697 321.5 H704 M697 323.5 H704 M697 325.5 H704 M697 327.5 H704 M697 329.5 H704" stroke="#3a3a3a" stroke-width="1" fill="none"/><text x="691" y="345.8" font-size="9" fill="#1a1a1a" text-anchor="end" font-weight="normal" font-style="normal" >Invert</text><rect x="693" y="336" width="15" height="15" fill="url(#btnDark)"/><path d="M693.5 351 V336.5 H708" stroke="#e8e8e8" fill="none"/><path d="M693 350.5 H707.5 V336" stroke="#000" fill="none"/><path d="M619.5 451 V407 A44 44 0 0 1 707.5 407 V451 H682.5 V430.86 A30.5 30.5 0 1 0 644.5 430.86 V451 Z" fill="#ffffff" stroke="#404040" stroke-width="1"/><polygon points="677.78,381.67 686.28,368.94 689.94,371.39 681.44,384.11" fill="#a9a9a9" stroke="#404040" stroke-width="0.8"/><text x="635.92" y="437.46" font-size="8.0" fill="#1a1a1a" text-anchor="middle" font-weight="normal" font-style="normal" >20</text><text x="627.47" y="424.8" font-size="8.0" fill="#1a1a1a" text-anchor="middle" font-weight="normal" font-style="normal" >10</text><text x="624.5" y="409.88" font-size="8.0" fill="#1a1a1a" text-anchor="middle" font-weight="normal" font-style="normal" >5</text><text x="627.47" y="394.96" font-size="8.0" fill="#1a1a1a" text-anchor="middle" font-weight="normal" font-style="normal" >2</text><text x="635.92" y="382.3" font-size="8.0" fill="#1a1a1a" text-anchor="middle" font-weight="normal" font-style="normal" >1</text><text x="648.58" y="373.85" font-size="8.0" fill="#1a1a1a" text-anchor="middle" font-weight="normal" font-style="normal" >0.5</text><text x="663.5" y="370.88" font-size="8.0" fill="#1a1a1a" text-anchor="middle" font-weight="normal" font-style="normal" >0.2</text><text x="678.42" y="373.85" font-size="8.0" fill="#1a1a1a" text-anchor="middle" font-weight="normal" font-style="normal" >0.1</text><text x="691.08" y="382.3" font-size="8.0" fill="#1a1a1a" text-anchor="middle" font-weight="normal" font-style="normal" >50</text><text x="699.53" y="394.96" font-size="8.0" fill="#1a1a1a" text-anchor="middle" font-weight="normal" font-style="normal" >20</text><text x="702.5" y="409.88" font-size="8.0" fill="#1a1a1a" text-anchor="middle" font-weight="normal" font-style="normal" >10</text><text x="699.53" y="424.8" font-size="8.0" fill="#1a1a1a" text-anchor="middle" font-weight="normal" font-style="normal" >5</text><text x="691.08" y="437.46" font-size="8.0" fill="#1a1a1a" text-anchor="middle" font-weight="normal" font-style="normal" >2</text><path d="M642.64 427.86 L639.46 431.04 M636.25 418.29 L632.09 420.01 M634.00 407.00 L629.50 407.00 M636.25 395.71 L632.09 393.99 M642.64 386.14 L639.46 382.96 M652.21 379.75 L650.49 375.59 M663.50 377.50 L663.50 373.00 M674.79 379.75 L676.51 375.59 M684.36 386.14 L687.54 382.96 M690.75 395.71 L694.91 393.99 M693.00 407.00 L697.50 407.00 M690.75 418.29 L694.91 420.01 M684.36 427.86 L687.54 431.04" stroke="#202020" stroke-width="1" fill="none"/><text x="630.5" y="446.7" font-size="9.2" fill="#1a1a1a" text-anchor="middle" font-weight="normal" font-style="normal" >V</text><text x="695.5" y="446.7" font-size="9.2" fill="#1a1a1a" text-anchor="middle" font-weight="normal" font-style="normal" >mV</text><rect x="646" y="438" width="35" height="13" fill="#ffffff"/><path d="M646.5 451 V438.5 H681" stroke="#000" fill="none"/><path d="M647 450.5 H680.5 V439" stroke="#c8c8c8" fill="none"/><text x="649" y="447.4" font-size="9" fill="#34348a" text-anchor="start" font-weight="normal" font-style="normal" >5</text><circle cx="663.5" cy="407" r="30" fill="url(#knobOuter)"/><circle cx="663.5" cy="407" r="29.6" fill="none" stroke="#5a5a5a" stroke-width="0.8" opacity="0.7"/><circle cx="662.9" cy="406.4" r="16.3" fill="#e8e8e8" opacity="0.8"/><circle cx="664.4" cy="407.9" r="16.6" fill="#2a2a2a" opacity="0.85"/><circle cx="663.5" cy="407" r="15.5" fill="url(#knobInner)"/><polygon points="635.50,407.00 644.50,401.50 644.50,412.50" fill="#1a9a4a"/><polygon points="673.40,416.90 666.68,415.13 671.63,410.18" fill="#1a9a4a"/><rect x="428" y="31" width="93" height="25" fill="#a9a9a9"/><rect x="428" y="31" width="93" height="1" fill="#e8e8e8"/><rect x="428" y="31" width="1" height="25" fill="#e8e8e8"/><rect x="428" y="57" width="93" height="184" fill="#a9a9a9"/><rect x="428" y="57" width="93" height="1" fill="#e8e8e8"/><rect x="428" y="57" width="1" height="184" fill="#e8e8e8"/><text x="472" y="48.8" font-size="12" fill="#f0a8b4" text-anchor="middle" font-weight="bold" font-style="normal" textLength="41.4" lengthAdjust="spacingAndGlyphs">Trigger</text><text x="459.5" y="66.6" font-size="9" fill="#1a1a1a" text-anchor="middle" font-weight="normal" font-style="normal" >Level</text><rect x="439.5" y="69.5" width="39" height="80" fill="#b8b8b8" stroke="#000"/><path d="M440 148.5 H478.5 M477.5 70 V148.5" stroke="#e8e8e8" fill="none"/><rect x="447" y="72" width="25" height="75" fill="url(#drumV)"/><rect x="447" y="72" width="25" height="75" fill="url(#drumEdgeH)"/><rect x="446" y="72" width="1" height="75" fill="#f4f4f4"/><rect x="471" y="72" width="1" height="75" fill="#1a1a1a"/><path d="M447 75.5 h3 M471 75.5 h-3 M447 79.5 h3 M471 79.5 h-3 M447 83.5 h3 M471 83.5 h-3 M447 87.5 h5 M471 87.5 h-5 M447 91.5 h3 M471 91.5 h-3 M447 95.5 h3 M471 95.5 h-3 M447 99.5 h3 M471 99.5 h-3 M447 103.5 h3 M471 103.5 h-3 M447 107.5 h5 M471 107.5 h-5 M447 111.5 h3 M471 111.5 h-3 M447 115.5 h3 M471 115.5 h-3 M447 119.5 h3 M471 119.5 h-3 M447 123.5 h3 M471 123.5 h-3 M447 127.5 h5 M471 127.5 h-5 M447 131.5 h3 M471 131.5 h-3 M447 135.5 h3 M471 135.5 h-3 M447 139.5 h3 M471 139.5 h-3 M447 143.5 h3 M471 143.5 h-3" stroke="#333" stroke-width="1" fill="none"/><text x="460.0" y="90.8" font-size="9.4" fill="#101010" text-anchor="middle" font-weight="normal" font-style="normal" >-10</text><text x="460.0" y="110.8" font-size="9.4" fill="#101010" text-anchor="middle" font-weight="normal" font-style="normal" >0</text><text x="460.0" y="130.8" font-size="9.4" fill="#101010" text-anchor="middle" font-weight="normal" font-style="normal" >10</text><path d="M440 103.5 L445.5 107.5 L440 111.5 Z" fill="#e00000"/><path d="M477.5 103.5 L472 107.5 L477.5 111.5 Z" fill="#e00000"/><path d="M435 97 L439 103 L436 103 L436 113 L439 113 L435 119 L431 113 L434 113 L434 103 L431 103 Z" fill="#f0a0ac"/><text x="502.5" y="72.5" font-size="9" fill="#1a1a1a" text-anchor="end" font-weight="normal" font-style="normal" >AC</text><text x="502.5" y="86.5" font-size="9" fill="#1a1a1a" text-anchor="end" font-weight="normal" font-style="normal" >DC</text><rect x="505.5" y="59.5" width="14" height="33" fill="#a9a9a9" stroke="#000"/><path d="M506 91.5 H519 M518.5 60 V92" stroke="#e0e0e0" fill="none"/><rect x="511" y="76" width="3" height="12" fill="#000"/><rect x="507" y="61" width="11" height="15" fill="#c8c8c8"/><path d="M507.5 76 V61.5 H517.5" stroke="#ffffff" fill="none"/><path d="M507 75.5 H517.5 V61" stroke="#404040" fill="none"/><path d="M509 64.5 H516 M509 66.5 H516 M509 68.5 H516 M509 70.5 H516 M509 72.5 H516" stroke="#3a3a3a" stroke-width="1" fill="none"/><rect x="505.5" y="104.5" width="14" height="33" fill="#a9a9a9" stroke="#000"/><path d="M506 136.5 H519 M518.5 105 V137" stroke="#e0e0e0" fill="none"/><rect x="511" y="121" width="3" height="12" fill="#000"/><rect x="507" y="106" width="11" height="15" fill="#c8c8c8"/><path d="M507.5 121 V106.5 H517.5" stroke="#ffffff" fill="none"/><path d="M507 120.5 H517.5 V106" stroke="#404040" fill="none"/><path d="M509 109.5 H516 M509 111.5 H516 M509 113.5 H516 M509 115.5 H516 M509 117.5 H516" stroke="#3a3a3a" stroke-width="1" fill="none"/><path d="M494.5 118 H497.5 V109 H501" stroke="#202020" stroke-width="1.1" fill="none"/><path d="M494.5 123 H497.5 V133 H501" stroke="#202020" stroke-width="1.1" fill="none"/><text x="502" y="160.2" font-size="9" fill="#1a1a1a" text-anchor="end" font-weight="normal" font-style="normal" >Auto</text><text x="502" y="175.8" font-size="9" fill="#1a1a1a" text-anchor="end" font-weight="normal" font-style="normal" >One-Shot</text><text x="502" y="192" font-size="9" fill="#1a1a1a" text-anchor="end" font-weight="normal" font-style="normal" textLength="34" lengthAdjust="spacingAndGlyphs">Cursors</text><rect x="505" y="150" width="15" height="15" fill="url(#btnPink)"/><path d="M505.5 165 V150.5 H520" stroke="#e8e8e8" fill="none"/><path d="M505 164.5 H519.5 V150" stroke="#000" fill="none"/><rect x="505" y="166" width="15" height="15" fill="url(#btnDark)"/><path d="M505.5 181 V166.5 H520" stroke="#e8e8e8" fill="none"/><path d="M505 180.5 H519.5 V166" stroke="#000" fill="none"/><rect x="505" y="182" width="15" height="15" fill="url(#btnDark)"/><path d="M505.5 197 V182.5 H520" stroke="#e8e8e8" fill="none"/><path d="M505 196.5 H519.5 V182" stroke="#000" fill="none"/><text x="474" y="212" font-size="9" fill="#1a1a1a" text-anchor="middle" font-weight="normal" font-style="normal" >Source</text><text x="455" y="222.8" font-size="9.3" fill="#f4f41c" text-anchor="middle" font-weight="normal" font-style="normal" >A</text><text x="468.5" y="222.8" font-size="9.3" fill="#2a98e0" text-anchor="middle" font-weight="normal" font-style="normal" >B</text><text x="483.5" y="222.8" font-size="9.3" fill="#e0258a" text-anchor="middle" font-weight="normal" font-style="normal" >C</text><text x="498" y="222.8" font-size="9.3" fill="#1a9a4a" text-anchor="middle" font-weight="normal" font-style="normal" >D</text><rect x="443" y="225" width="64" height="14" fill="#f4f4f4"/><rect x="443" y="226" width="63" height="12" fill="#000"/><rect x="444" y="227" width="61" height="11" fill="#a9a9a9"/><rect x="448" y="231" width="53" height="2" fill="#000"/><rect x="448" y="233" width="53" height="1" fill="#e8e8e8"/><rect x="460" y="228" width="15" height="10" fill="#d4d4d4"/><path d="M460.5 238 V228.5 H475" stroke="#ffffff" fill="none"/><path d="M460 237.5 H474.5 V228" stroke="#303030" fill="none"/><path d="M463.5 230 V236 M465.5 230 V236 M467.5 230 V236 M469.5 230 V236 M471.5 230 V236" stroke="#303030" stroke-width="1" fill="none"/><rect x="428" y="243" width="93" height="25" fill="#a9a9a9"/><rect x="428" y="243" width="93" height="1" fill="#e8e8e8"/><rect x="428" y="243" width="1" height="25" fill="#e8e8e8"/><rect x="428" y="269" width="93" height="184" fill="#a9a9a9"/><rect x="428" y="269" width="93" height="1" fill="#e8e8e8"/><rect x="428" y="269" width="1" height="184" fill="#e8e8e8"/><text x="472.1" y="260.8" font-size="12" fill="#e87a20" text-anchor="middle" font-weight="bold" font-style="normal" textLength="60.8" lengthAdjust="spacingAndGlyphs">Horizontal</text><text x="474" y="282" font-size="9" fill="#1a1a1a" text-anchor="middle" font-weight="normal" font-style="normal" >Source</text><path d="M440.5 291 L450.5 285 L451 291" stroke="#e87a20" stroke-width="1.3" fill="none"/><text x="460.7" y="291.2" font-size="9.3" fill="#f4f41c" text-anchor="middle" font-weight="normal" font-style="normal" >A</text><text x="475.3" y="291.2" font-size="9.3" fill="#2a98e0" text-anchor="middle" font-weight="normal" font-style="normal" >B</text><text x="489.3" y="291.2" font-size="9.3" fill="#e0258a" text-anchor="middle" font-weight="normal" font-style="normal" >C</text><text x="504.6" y="291.2" font-size="9.3" fill="#1a9a4a" text-anchor="middle" font-weight="normal" font-style="normal" >D</text><rect x="436" y="294" width="79" height="14" fill="#f4f4f4"/><rect x="436" y="295" width="78" height="12" fill="#000"/><rect x="437" y="296" width="76" height="11" fill="#a9a9a9"/><rect x="441" y="300" width="68" height="2" fill="#000"/><rect x="441" y="302" width="68" height="1" fill="#e8e8e8"/><rect x="438" y="297" width="15" height="10" fill="#d4d4d4"/><path d="M438.5 307 V297.5 H453" stroke="#ffffff" fill="none"/><path d="M438 306.5 H452.5 V297" stroke="#303030" fill="none"/><path d="M441.5 299 V305 M443.5 299 V305 M445.5 299 V305 M447.5 299 V305 M449.5 299 V305" stroke="#303030" stroke-width="1" fill="none"/><text x="474.5" y="320" font-size="9" fill="#1a1a1a" text-anchor="middle" font-weight="normal" font-style="normal" >Position</text><rect x="436.5" y="322.5" width="79" height="39" fill="#b8b8b8" stroke="#000"/><path d="M437 360 H515 M514.5 324 V360" stroke="#e8e8e8" fill="none"/><rect x="438" y="330" width="75" height="24.5" fill="url(#drumH)"/><rect x="438" y="330" width="75" height="24.5" fill="url(#drumEdgeV)"/><rect x="438" y="329" width="75" height="1" fill="#f0f0f0"/><rect x="438" y="354" width="75" height="1" fill="#101010"/><path d="M438.5 330.5 v2.5 M438.5 354 v-2.5 M442.5 330.5 v2.5 M442.5 354 v-2.5 M446.5 330.5 v2.5 M446.5 354 v-2.5 M450.5 330.5 v2.5 M450.5 354 v-2.5 M454.5 330.5 v4 M454.5 354 v-4 M458.5 330.5 v2.5 M458.5 354 v-2.5 M462.5 330.5 v2.5 M462.5 354 v-2.5 M466.5 330.5 v2.5 M466.5 354 v-2.5 M470.5 330.5 v2.5 M470.5 354 v-2.5 M474.5 330.5 v4 M474.5 354 v-4 M478.5 330.5 v2.5 M478.5 354 v-2.5 M482.5 330.5 v2.5 M482.5 354 v-2.5 M486.5 330.5 v2.5 M486.5 354 v-2.5 M490.5 330.5 v2.5 M490.5 354 v-2.5 M494.5 330.5 v4 M494.5 354 v-4 M498.5 330.5 v2.5 M498.5 354 v-2.5 M502.5 330.5 v2.5 M502.5 354 v-2.5 M506.5 330.5 v2.5 M506.5 354 v-2.5 M510.5 330.5 v2.5 M510.5 354 v-2.5" stroke="#303030" stroke-width="1" fill="none"/><text x="454.5" y="345.3" font-size="9.5" fill="#1a1a1a" text-anchor="middle" font-weight="normal" font-style="normal" >210</text><text x="474.5" y="345.3" font-size="9.5" fill="#1a1a1a" text-anchor="middle" font-weight="normal" font-style="normal" >200</text><text x="494.5" y="345.3" font-size="9.5" fill="#1a1a1a" text-anchor="middle" font-weight="normal" font-style="normal" >190</text><path d="M470 324.5 L479 324.5 L474.5 329 Z" fill="#e00000"/><path d="M470 359.5 L479 359.5 L474.5 355 Z" fill="#e00000"/><path d="M431.5 451 V407 A44 44 0 0 1 519.5 407 V451 H494.5 V430.86 A30.5 30.5 0 1 0 456.5 430.86 V451 Z" fill="#ffffff" stroke="#404040" stroke-width="1"/><polygon points="488.90,381.19 496.95,368.18 500.69,370.49 492.64,383.50" fill="#a9a9a9" stroke="#404040" stroke-width="0.8"/><text x="447.22" y="438.02" font-size="7.6" fill="#1a1a1a" text-anchor="middle" font-weight="normal" font-style="normal" >200</text><text x="440.56" y="429.2" font-size="7.6" fill="#1a1a1a" text-anchor="middle" font-weight="normal" font-style="normal" >100</text><text x="436.56" y="418.89" font-size="7.6" fill="#1a1a1a" text-anchor="middle" font-weight="normal" font-style="normal" >50</text><text x="435.54" y="407.89" font-size="7.6" fill="#1a1a1a" text-anchor="middle" font-weight="normal" font-style="normal" >20</text><text x="437.57" y="397.02" font-size="7.6" fill="#1a1a1a" text-anchor="middle" font-weight="normal" font-style="normal" >10</text><text x="442.5" y="387.13" font-size="7.6" fill="#1a1a1a" text-anchor="middle" font-weight="normal" font-style="normal" >5</text><text x="449.95" y="378.96" font-size="7.6" fill="#1a1a1a" text-anchor="middle" font-weight="normal" font-style="normal" >2</text><text x="459.34" y="373.14" font-size="7.6" fill="#1a1a1a" text-anchor="middle" font-weight="normal" font-style="normal" >1</text><text x="469.97" y="370.12" font-size="7.6" fill="#1a1a1a" text-anchor="middle" font-weight="normal" font-style="normal" >0.5</text><text x="481.03" y="370.12" font-size="7.6" fill="#1a1a1a" text-anchor="middle" font-weight="normal" font-style="normal" >0.2</text><text x="491.66" y="373.14" font-size="7.6" fill="#1a1a1a" text-anchor="middle" font-weight="normal" font-style="normal" >0.1</text><text x="501.05" y="378.96" font-size="7.6" fill="#1a1a1a" text-anchor="middle" font-weight="normal" font-style="normal" >50</text><text x="508.5" y="387.13" font-size="7.6" fill="#1a1a1a" text-anchor="middle" font-weight="normal" font-style="normal" >20</text><text x="513.43" y="397.02" font-size="7.6" fill="#1a1a1a" text-anchor="middle" font-weight="normal" font-style="normal" >10</text><text x="515.46" y="407.89" font-size="7.6" fill="#1a1a1a" text-anchor="middle" font-weight="normal" font-style="normal" >5</text><text x="514.44" y="418.89" font-size="7.6" fill="#1a1a1a" text-anchor="middle" font-weight="normal" font-style="normal" >2</text><text x="510.44" y="429.2" font-size="7.6" fill="#1a1a1a" text-anchor="middle" font-weight="normal" font-style="normal" >1</text><text x="503.78" y="438.02" font-size="7.6" fill="#1a1a1a" text-anchor="middle" font-weight="normal" font-style="normal" >0.5</text><path d="M454.64 427.86 L451.46 431.04 M449.73 421.35 L445.80 423.54 M446.78 413.75 L442.40 414.78 M446.03 405.64 L441.54 405.43 M447.53 397.63 L443.26 396.20 M451.16 390.33 L447.45 387.79 M456.65 384.30 L453.78 380.84 M463.58 380.01 L461.77 375.90 M471.42 377.78 L470.80 373.33 M479.58 377.78 L480.20 373.33 M487.42 380.01 L489.23 375.90 M494.35 384.30 L497.22 380.84 M499.84 390.33 L503.55 387.79 M503.47 397.63 L507.74 396.20 M504.97 405.64 L509.46 405.43 M504.22 413.75 L508.60 414.78 M501.27 421.35 L505.20 423.54 M496.36 427.86 L499.54 431.04" stroke="#202020" stroke-width="1" fill="none"/><text x="442.5" y="446.7" font-size="9" fill="#1a1a1a" text-anchor="middle" font-weight="normal" font-style="normal" >ms</text><text x="507.5" y="446.7" font-size="9" fill="#1a1a1a" text-anchor="middle" font-weight="normal" font-style="normal" >μs</text><rect x="458" y="438" width="35" height="13" fill="#ffffff"/><path d="M458.5 451 V438.5 H493" stroke="#000" fill="none"/><path d="M459 450.5 H492.5 V439" stroke="#c8c8c8" fill="none"/><text x="461" y="447.4" font-size="9" fill="#34348a" text-anchor="start" font-weight="normal" font-style="normal" >5m</text><circle cx="475.5" cy="407" r="30" fill="url(#knobOuter)"/><circle cx="475.5" cy="407" r="29.6" fill="none" stroke="#5a5a5a" stroke-width="0.8" opacity="0.7"/><circle cx="474.9" cy="406.4" r="16.3" fill="#e8e8e8" opacity="0.8"/><circle cx="476.4" cy="407.9" r="16.6" fill="#2a2a2a" opacity="0.85"/><circle cx="475.5" cy="407" r="15.5" fill="url(#knobInner)"/><polygon points="452.40,391.18 462.93,391.72 456.72,400.80" fill="#e87a20"/><polygon points="485.40,416.90 478.68,415.13 483.63,410.18" fill="#e87a20"/><rect x="95.5" y="475.5" width="520" height="151" rx="2" fill="url(#glass2)" stroke="#3c4650" stroke-opacity="0.8"/><rect x="96.5" y="476.5" width="518" height="149" rx="1.5" fill="none" stroke="#ffffff" stroke-opacity="0.5"/><text x="103.5" y="492" font-size="12.5" fill="#101010" text-anchor="start" font-weight="normal" font-style="normal" textLength="117" lengthAdjust="spacingAndGlyphs">VSM Signal Generator</text><rect x="593.5" y="480.5" width="16" height="16" rx="2.5" fill="#dcedf7" stroke="#5c6c7c"/><path d="M599 486.3 L604 490.7 M604 486.3 L599 490.7" stroke="#3a3a4a" stroke-width="3.2" stroke-linecap="round"/><path d="M599 486.3 L604 490.7 M604 486.3 L599 490.7" stroke="#ffffff" stroke-width="1.5" stroke-linecap="round"/><rect x="101" y="499" width="509" height="122" fill="#ffffff"/><rect x="101" y="499" width="508" height="121" fill="#404040"/><rect x="102" y="500" width="507" height="120" fill="#c8c8c8"/><rect x="101" y="620" width="509" height="1" fill="#000"/><polygon points="110.9,526.4 122.7,514.4 195.4,514.4 208.1,526.4 208.1,597.7 195.4,610.7 182.7,610.7 182.7,594.4 190.8,587.7 190.8,535 186.3,531.3 131.8,531.3 127.3,535.9 127.3,587.7 135.4,594.4 145,594.4 145,610.7 122.7,610.7 110.9,598.6" fill="#e6e6e6" stroke="#000" stroke-width="1.4" stroke-linejoin="miter"/><text x="135.4" y="525.4" font-size="8.8" fill="#1a1a1a" text-anchor="middle" font-weight="normal" font-style="normal" >5</text><text x="154.1" y="525.4" font-size="8.8" fill="#1a1a1a" text-anchor="middle" font-weight="normal" font-style="normal" >6</text><text x="174.5" y="525.4" font-size="8.8" fill="#1a1a1a" text-anchor="middle" font-weight="normal" font-style="normal" >7</text><text x="194.1" y="528.7" font-size="8.8" fill="#1a1a1a" text-anchor="middle" font-weight="normal" font-style="normal" >8</text><text x="119.1" y="539.1" font-size="8.8" fill="#1a1a1a" text-anchor="middle" font-weight="normal" font-style="normal" >4</text><text x="119.1" y="557.2" font-size="8.8" fill="#1a1a1a" text-anchor="middle" font-weight="normal" font-style="normal" >3</text><text x="119.1" y="574.7" font-size="8.8" fill="#1a1a1a" text-anchor="middle" font-weight="normal" font-style="normal" >2</text><text x="119.1" y="594.6" font-size="8.8" fill="#1a1a1a" text-anchor="middle" font-weight="normal" font-style="normal" >1</text><text x="135.4" y="606.5" font-size="8.8" fill="#1a1a1a" text-anchor="middle" font-weight="normal" font-style="normal" >0</text><text x="199" y="548.1" font-size="8.8" fill="#1a1a1a" text-anchor="middle" font-weight="normal" font-style="normal" >9</text><text x="199" y="566.3" font-size="8.8" fill="#1a1a1a" text-anchor="middle" font-weight="normal" font-style="normal" >10</text><text x="199" y="585.6" font-size="8.8" fill="#1a1a1a" text-anchor="middle" font-weight="normal" font-style="normal" >11</text><text x="193.6" y="603.7" font-size="8.8" fill="#1a1a1a" text-anchor="middle" font-weight="normal" font-style="normal" >12</text><text x="160" y="539.6" font-size="9.2" fill="#1a1a1a" text-anchor="middle" font-weight="normal" font-style="italic" >Centre</text><circle cx="160" cy="563.5" r="17.5" fill="url(#sphBlue)"/><line x1="160.00" y1="563.50" x2="146.16" y2="572.49" stroke="#202028" stroke-width="2" stroke-linecap="round"/><rect x="148" y="596.7" width="32" height="13.3" rx="3" fill="#000"/><text x="164.0" y="608.2" font-size="12.5" fill="#3ce83c" text-anchor="middle" font-weight="normal" font-style="normal" >100</text><polygon points="214.7,526.6 225.2,514.2 237.5,514.2 237.5,530.3 232.8,536 232.8,583.4 214.7,583.4" fill="#e6e6e6" stroke="#000" stroke-width="1.4" stroke-linejoin="miter"/><polygon points="240.3,514.2 300.6,514.2 312.4,526.6 312.4,539.8 296.3,539.8 296.3,536 291.5,531.3 240.3,531.3" fill="#e6e6e6" stroke="#000" stroke-width="1.4" stroke-linejoin="miter"/><polygon points="295.3,543.6 312.4,543.6 312.4,583.4 295.3,583.4" fill="#e6e6e6" stroke="#000" stroke-width="1.4" stroke-linejoin="miter"/><text x="224.2" y="513" font-size="6.6" fill="#1a1a1a" text-anchor="middle" font-weight="normal" font-style="normal" >Hz</text><text x="303.9" y="513" font-size="6.6" fill="#1a1a1a" text-anchor="middle" font-weight="normal" font-style="normal" >KHz</text><text x="303.9" y="590.2" font-size="6.6" fill="#1a1a1a" text-anchor="middle" font-weight="normal" font-style="normal" >MHz</text><text x="227" y="531.6" font-size="8.8" fill="#1a1a1a" text-anchor="middle" font-weight="normal" font-style="normal" >10</text><text x="223.3" y="558.2" font-size="8.8" fill="#1a1a1a" text-anchor="middle" font-weight="normal" font-style="normal" >1</text><text x="223.7" y="580.0" font-size="8.8" fill="#1a1a1a" text-anchor="middle" font-weight="normal" font-style="normal" >0.1</text><text x="250.8" y="526.3000000000001" font-size="8.8" fill="#1a1a1a" text-anchor="middle" font-weight="normal" font-style="normal" >0.1</text><text x="274.5" y="526.3000000000001" font-size="8.8" fill="#1a1a1a" text-anchor="middle" font-weight="normal" font-style="normal" >1</text><text x="299.1" y="531.2" font-size="8.8" fill="#1a1a1a" text-anchor="middle" font-weight="normal" font-style="normal" >10</text><text x="303.9" y="560.1" font-size="8.8" fill="#1a1a1a" text-anchor="middle" font-weight="normal" font-style="normal" >0.1</text><text x="303.3" y="578.1" font-size="8.8" fill="#1a1a1a" text-anchor="middle" font-weight="normal" font-style="normal" >1</text><text x="265" y="539.6" font-size="9.2" fill="#1a1a1a" text-anchor="middle" font-weight="normal" font-style="italic" >Range</text><circle cx="265" cy="563.5" r="18" fill="url(#sphBlue)"/><line x1="265.00" y1="563.50" x2="260.32" y2="548.20" stroke="#202028" stroke-width="2" stroke-linecap="round"/><text x="264.5" y="606.8" font-size="8.9" fill="#1a1a1a" text-anchor="middle" font-weight="normal" font-style="normal" >Frequency</text><polygon points="320.5,526.4 332.3,514.4 405.0,514.4 417.7,526.4 417.7,597.7 405.0,610.7 392.3,610.7 392.3,594.4 400.4,587.7 400.4,535 395.9,531.3 341.4,531.3 336.9,535.9 336.9,587.7 345.0,594.4 354.6,594.4 354.6,610.7 332.3,610.7 320.5,598.6" fill="#e6e6e6" stroke="#000" stroke-width="1.4" stroke-linejoin="miter"/><text x="345.0" y="525.4" font-size="8.8" fill="#1a1a1a" text-anchor="middle" font-weight="normal" font-style="normal" >5</text><text x="363.7" y="525.4" font-size="8.8" fill="#1a1a1a" text-anchor="middle" font-weight="normal" font-style="normal" >6</text><text x="384.1" y="525.4" font-size="8.8" fill="#1a1a1a" text-anchor="middle" font-weight="normal" font-style="normal" >7</text><text x="403.7" y="528.7" font-size="8.8" fill="#1a1a1a" text-anchor="middle" font-weight="normal" font-style="normal" >8</text><text x="328.7" y="539.1" font-size="8.8" fill="#1a1a1a" text-anchor="middle" font-weight="normal" font-style="normal" >4</text><text x="328.7" y="557.2" font-size="8.8" fill="#1a1a1a" text-anchor="middle" font-weight="normal" font-style="normal" >3</text><text x="328.7" y="574.7" font-size="8.8" fill="#1a1a1a" text-anchor="middle" font-weight="normal" font-style="normal" >2</text><text x="328.7" y="594.6" font-size="8.8" fill="#1a1a1a" text-anchor="middle" font-weight="normal" font-style="normal" >1</text><text x="345.0" y="606.5" font-size="8.8" fill="#1a1a1a" text-anchor="middle" font-weight="normal" font-style="normal" >0</text><text x="408.6" y="548.1" font-size="8.8" fill="#1a1a1a" text-anchor="middle" font-weight="normal" font-style="normal" >9</text><text x="408.6" y="566.3" font-size="8.8" fill="#1a1a1a" text-anchor="middle" font-weight="normal" font-style="normal" >10</text><text x="408.6" y="585.6" font-size="8.8" fill="#1a1a1a" text-anchor="middle" font-weight="normal" font-style="normal" >11</text><text x="403.2" y="603.7" font-size="8.8" fill="#1a1a1a" text-anchor="middle" font-weight="normal" font-style="normal" >12</text><text x="370" y="539.6" font-size="9.2" fill="#1a1a1a" text-anchor="middle" font-weight="normal" font-style="italic" >Level</text><circle cx="370.5" cy="563.2" r="17.7" fill="url(#sphRed)"/><line x1="370.50" y1="563.20" x2="381.61" y2="574.71" stroke="#202028" stroke-width="2" stroke-linecap="round"/><rect x="358" y="597" width="32" height="13" rx="3" fill="#000"/><text x="374.0" y="608.2" font-size="12.5" fill="#3ce83c" text-anchor="middle" font-weight="normal" font-style="normal" >12.0</text><polygon points="424.7,526.6 437.1,514.2 472.2,514.2 472.2,530.3 446.6,530.3 442.4,535.1 442.4,565.4 424.7,565.4" fill="#e6e6e6" stroke="#000" stroke-width="1.4" stroke-linejoin="miter"/><polygon points="475,514.2 510.6,514.2 523.4,526.6 523.4,565.4 506.3,565.4 506.3,535.1 501.9,530.3 475,530.3" fill="#e6e6e6" stroke="#000" stroke-width="1.4" stroke-linejoin="miter"/><text x="433.7" y="513" font-size="6.6" fill="#1a1a1a" text-anchor="middle" font-weight="normal" font-style="normal" >mV</text><text x="513.9" y="513" font-size="6.6" fill="#1a1a1a" text-anchor="middle" font-weight="normal" font-style="normal" >V</text><text x="460.2" y="526.3000000000001" font-size="8.8" fill="#1a1a1a" text-anchor="middle" font-weight="normal" font-style="normal" >10</text><text x="487.3" y="526.3000000000001" font-size="8.8" fill="#1a1a1a" text-anchor="middle" font-weight="normal" font-style="normal" >0.1</text><text x="433.3" y="556.3000000000001" font-size="8.8" fill="#1a1a1a" text-anchor="middle" font-weight="normal" font-style="normal" >1</text><text x="513.3" y="555.4000000000001" font-size="8.8" fill="#1a1a1a" text-anchor="middle" font-weight="normal" font-style="normal" >1</text><text x="474" y="539.6" font-size="9.2" fill="#1a1a1a" text-anchor="middle" font-weight="normal" font-style="italic" >Range</text><circle cx="475" cy="562.8" r="17.7" fill="url(#sphRed)"/><line x1="475.00" y1="562.80" x2="490.97" y2="556.99" stroke="#202028" stroke-width="2" stroke-linecap="round"/><text x="474" y="606.8" font-size="8.9" fill="#1a1a1a" text-anchor="middle" font-weight="normal" font-style="normal" >Amplitude</text><circle cx="534.2" cy="517" r="3.6" fill="url(#ledOff)"/><circle cx="534.2" cy="532.3" r="3.6" fill="url(#ledOn)"/><circle cx="534.2" cy="547.2" r="3.6" fill="url(#ledOff)"/><circle cx="534.2" cy="562.4" r="3.6" fill="url(#ledOff)"/><circle cx="534.2" cy="579" r="3.6" fill="url(#ledOff)"/><circle cx="534.2" cy="593.7" r="3.6" fill="url(#ledOn)"/><path d="M546.5 521 V514.5 H552.5 V520.5 H558.5 V514" stroke="#0a0a0a" stroke-width="1.3" fill="none"/><path d="M546.5 535 V529.8 H548 L559 534.8" stroke="#0a0a0a" stroke-width="1.3" fill="none"/><path d="M546 548.2 L550.5 544.3 L555.4 550.6 L559 547" stroke="#0a0a0a" stroke-width="1.3" fill="none"/><path d="M546 561.5 C547.5 557, 549.5 556.5, 551 558.5 C552.5 561, 553 565.5, 555.5 565.5 C557.5 565.5, 558.5 563, 559 561" stroke="#0a0a0a" stroke-width="1.3" fill="none"/><text x="553" y="583" font-size="8.9" fill="#1a1a1a" text-anchor="middle" font-weight="normal" font-style="normal" >Uni</text><text x="550.6" y="597.3" font-size="8.9" fill="#1a1a1a" text-anchor="middle" font-weight="normal" font-style="normal" >Bi</text><rect x="574.5" y="515.3" width="19.5" height="19.5" fill="#808080"/><path d="M575 534.8 V515.8 H594" stroke="#f0f0f0" fill="none"/><path d="M574.5 534.3 H593.5 V515.3" stroke="#101010" fill="none"/><rect x="575.5" y="516.3" width="18" height="18" fill="none" stroke="#202020" stroke-width="0.8"/><rect x="574.5" y="577" width="19.5" height="19.5" fill="#808080"/><path d="M575 596.5 V577.5 H594" stroke="#f0f0f0" fill="none"/><path d="M574.5 596 H593.5 V577" stroke="#101010" fill="none"/><rect x="575.5" y="578" width="18" height="18" fill="none" stroke="#202020" stroke-width="0.8"/><text x="584.2" y="547" font-size="8.9" fill="#1a1a1a" text-anchor="middle" font-weight="normal" font-style="normal" >Waveform</text><text x="585" y="607" font-size="8.9" fill="#1a1a1a" text-anchor="middle" font-weight="normal" font-style="normal" >Polarity</text>
</svg>
</body></html>
